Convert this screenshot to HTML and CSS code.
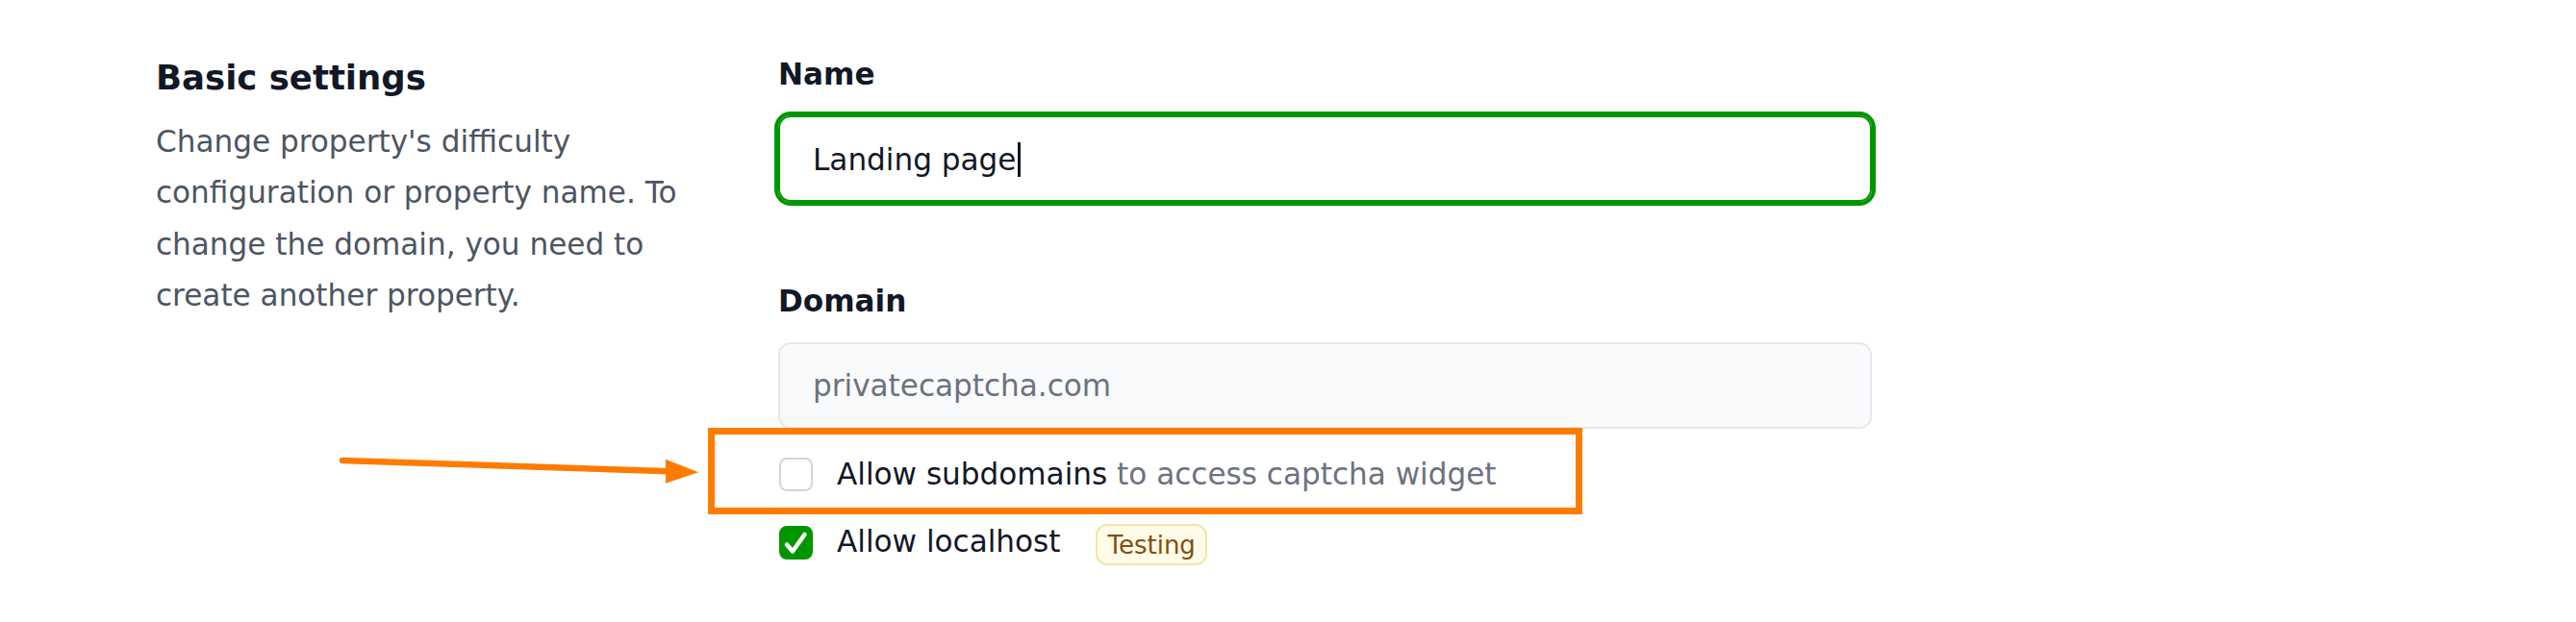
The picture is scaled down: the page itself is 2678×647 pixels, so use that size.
FILE: index.html
```html
<!DOCTYPE html>
<html lang="en">
<head>
<meta charset="utf-8">
<title>Basic settings</title>
<link rel="stylesheet" href="styles.css">
</head>
<body>
<div class="page">
  <section class="settings">
    <div class="intro">
      <h2 class="intro-title">Basic settings</h2>
      <p class="intro-desc">Change property's difficulty configuration or property name. To change the domain, you need to create another property.</p>
    </div>
    <div class="form">
      <div class="field">
        <label class="field-label">Name</label>
        <div class="input input-focus"><span>Landing page</span><span class="caret"></span></div>
      </div>
      <div class="field field-domain">
        <label class="field-label">Domain</label>
        <div class="input input-disabled">privatecaptcha.com</div>
      </div>
      <div class="checks">
        <div class="check-row">
          <span class="checkbox"></span>
          <span class="check-text">Allow subdomains <span class="muted">to access captcha widget</span></span>
        </div>
        <div class="check-row">
          <span class="checkbox checked">
            <svg class="check-icon" viewBox="0 0 35 35" width="35" height="35"><path d="M8 19.5 L14 26.5 L26.5 9" fill="none" stroke="#ffffff" stroke-width="4.5" stroke-linecap="round" stroke-linejoin="round"/></svg>
          </span>
          <span class="check-text">Allow localhost</span>
          <span class="badge">Testing</span>
        </div>
      </div>
    </div>
  </section>
  <div class="highlight"></div>
  <svg class="arrow" viewBox="0 0 400 60" width="400" height="60">
    <line x1="16" y1="19" x2="356" y2="30.2" stroke="#ff7b00" stroke-width="6.5" stroke-linecap="round"/>
    <polygon points="352,17.7 386,31.3 352,42.7" fill="#ff7b00"/>
  </svg>
</div>
</body>
</html>
```

FILE: styles.css
```css
html, body {
  margin: 0;
  padding: 0;
  background: #ffffff;
}

body {
  font-family: "DejaVu Sans", "Liberation Sans", sans-serif;
}

.page {
  position: relative;
  width: 2678px;
  height: 647px;
  overflow: hidden;
  box-sizing: border-box;
  padding: 50px 0 0 162px;
}

.settings {
  display: grid;
  grid-template-columns: 573px 1137px;
  column-gap: 74px;
}

.intro-title {
  margin: 0;
  font-size: 35.5px;
  line-height: 62px;
  font-weight: 700;
  color: #111827;
}

.intro-desc {
  margin: 9px 0 0;
  font-size: 31.1px;
  line-height: 53.3px;
  color: #4b5563;
}

.form {
  padding-top: 1px;
}

.field-label {
  display: block;
  font-size: 31.1px;
  line-height: 53.3px;
  font-weight: 700;
  color: #111827;
}

.input {
  margin-top: 16px;
  height: 90px;
  box-sizing: border-box;
  border: 2px solid #e5e7eb;
  border-radius: 13px;
  padding: 17.3px 0 0 34px;
  font-size: 31.1px;
  line-height: 53.3px;
  color: #111827;
  white-space: nowrap;
}

.input-focus {
  border-color: #009600;
  box-shadow: 0 0 0 4px #009600;
}

.caret {
  display: inline-block;
  width: 2.5px;
  height: 36px;
  margin-left: 2px;
  vertical-align: -7px;
  background: #111827;
}

.input-disabled {
  background: #f9fafb;
  color: #6b7280;
}

.field-domain {
  margin-top: 76.5px;
}

.checks {
  margin-top: 20.5px;
  display: flex;
  flex-direction: column;
  gap: 17.3px;
}

.check-row {
  display: flex;
  align-items: center;
  font-size: 31.1px;
  line-height: 53.3px;
  color: #111827;
  white-space: nowrap;
}

.checkbox {
  flex: none;
  display: block;
  width: 35px;
  height: 35px;
  box-sizing: border-box;
  border: 2px solid #d1d5db;
  border-radius: 8px;
  margin-left: 1px;
  margin-right: 25px;
  background: #ffffff;
}

.checkbox.checked {
  background: #009600;
  border-color: #009600;
  position: relative;
  top: 1px;
}

.check-icon {
  display: block;
  margin: -2px 0 0 -2px;
}

.muted {
  color: #6b7280;
}

.badge {
  margin-left: 37px;
  margin-top: 6px;
  font-size: 26px;
  line-height: 34px;
  padding: 2.5px 10px;
  border: 2px solid #f3e4ad;
  border-radius: 12px;
  background: #fefbe8;
  color: #854d0e;
}

.highlight {
  position: absolute;
  left: 736px;
  top: 445px;
  width: 909px;
  height: 90px;
  box-sizing: border-box;
  border: 7px solid #ff7b00;
}

.arrow {
  position: absolute;
  left: 340px;
  top: 460px;
}
```
